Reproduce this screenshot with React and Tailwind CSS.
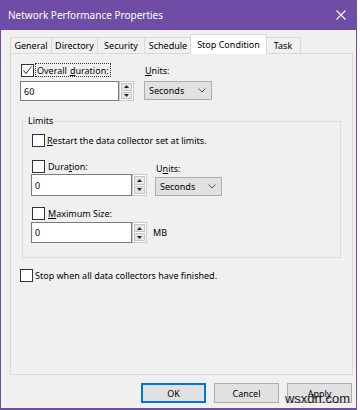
import React from "react";

const font = { fontFamily: '"Noto Sans", "Liberation Sans", sans-serif' };

function Check({ checked }) {
  return (
    <div className="w-[13px] h-[13px] border border-[#333333] bg-white flex items-center justify-center shrink-0">
      {checked && (
        <svg width="11" height="11" viewBox="0 0 11 11">
          <polyline points="1.5,5.5 4,8.5 9.5,1.5" fill="none" stroke="#222" strokeWidth="1" />
        </svg>
      )}
    </div>
  );
}

function Spinner() {
  return (
    <div className="w-[15px] h-full flex flex-col gap-px bg-white border border-[#c8c8c8] p-px">
      <div className="flex-1 bg-[#e6e6e6] border border-[#c4c4c4] flex items-center justify-center">
        <svg width="5" height="3" viewBox="0 0 5 3"><polygon points="0,3 5,3 2.5,0" fill="#222" /></svg>
      </div>
      <div className="flex-1 bg-[#e6e6e6] border border-[#c4c4c4] flex items-center justify-center">
        <svg width="5" height="3" viewBox="0 0 5 3"><polygon points="0,0 5,0 2.5,3" fill="#222" /></svg>
      </div>
    </div>
  );
}

function NumBox({ value, w, h }) {
  return (
    <div className="flex" style={{ height: h }}>
      <div className="border border-[#7a7a7a] bg-white flex items-center pl-[3px] text-black" style={{ width: w }}>
        {value}
      </div>
      <Spinner />
    </div>
  );
}

function Select({ w }) {
  return (
    <div
      className="h-[19px] bg-[#e1e1e1] border border-[#adadad] flex items-center justify-between pl-[4px] pr-[5px] text-black"
      style={{ width: w }}
    >
      <span>Seconds</span>
      <svg width="8" height="5" viewBox="0 0 8 5">
        <polyline points="0.5,0.5 4,4 7.5,0.5" fill="none" stroke="#555" strokeWidth="1" />
      </svg>
    </div>
  );
}

function Btn({ children, primary }) {
  return (
    <div
      className={
        "w-[65px] h-[20px] flex items-center justify-center bg-[#e1e1e1] text-black " +
        (primary ? "border-2 border-[#0078d7]" : "border border-[#adadad]")
      }
    >
      {children}
    </div>
  );
}

export default function App() {
  const tabs = [
    ["General", 42],
    ["Directory", 47],
    ["Security", 48],
    ["Schedule", 48],
  ];
  return (
    <div className="w-[360px] h-[410px] bg-white text-[9px] leading-none text-black" style={font}>
      <div className="relative w-[357px] h-[410px] flex flex-col bg-[#f0f0f0] border-x border-b-2 border-[#6f4ca6]">
        <div className="h-[30px] -mx-px bg-[#6f4ca6] flex items-center justify-between pl-[8px] pr-[11px] text-white text-[10px]">
          <span>Network Performance Properties</span>
          <svg width="10" height="10" viewBox="0 0 10 10">
            <line x1="0.5" y1="0.5" x2="9.5" y2="9.5" stroke="#fff" strokeWidth="1.1" />
            <line x1="9.5" y1="0.5" x2="0.5" y2="9.5" stroke="#fff" strokeWidth="1.1" />
          </svg>
        </div>

        <div className="pl-[9px] mt-[3px] flex items-end h-[20px]">
          {tabs.map(([t, w]) => (
            <div
              key={t}
              className="h-[16px] border border-b-0 border-[#d9d9d9] -mr-px bg-[#f0f0f0] flex items-center justify-center"
              style={{ width: w }}
            >
              {t}
            </div>
          ))}
          <div className="relative z-10 h-[20px] w-[77px] -mx-[1px] -mb-px border border-b-0 border-[#d9d9d9] bg-white flex items-center justify-center">
            Stop Condition
          </div>
          <div className="h-[16px] w-[35px] border border-b-0 border-l-0 border-[#d9d9d9] bg-[#f0f0f0] flex items-center justify-center">
            Task
          </div>
        </div>

        <div className="ml-[9px] w-[343px] h-[322px] border border-[#d9d9d9] bg-[#f0f0f0] pl-[10px] pt-[9px]">
          <div className="flex">
            <div className="w-[123px] flex flex-col">
              <div className="h-[14px] flex items-center">
                <Check checked />
                <span className="ml-px px-px h-[14px] flex items-center border border-dotted border-[#333]">
                  Overall <span className="ml-[3px] underline underline-offset-1">d</span>uration:
                </span>
              </div>
              <div className="mt-[4px] -ml-px">
                <NumBox value="60" w={99} h={20} />
              </div>
            </div>
            <div className="flex flex-col">
              <div className="h-[14px] flex items-center pl-px">
                <span className="underline underline-offset-1">U</span>nits:
              </div>
              <div className="mt-[4px]">
                <Select w={68} />
              </div>
            </div>
          </div>

          <div className="relative ml-px mt-[20px] w-[319px] h-[137px] border border-[#dcdcdc] pl-[9px] pt-[12px]">
            <span className="absolute left-[4px] -top-[6px] px-px bg-[#f0f0f0]">Limits</span>
            <div className="flex items-center h-[13px]">
              <Check />
              <span className="ml-[2px]">
                <span className="underline underline-offset-1">R</span>estart the data collector set at limits.
              </span>
            </div>
            <div className="flex mt-[13px]">
              <div className="w-[123px] flex flex-col">
                <div className="h-[13px] flex items-center">
                  <Check />
                  <span className="ml-[3px]">
                    Dura<span className="underline underline-offset-1">t</span>ion:
                  </span>
                </div>
                <div className="mt-px -ml-px">
                  <NumBox value="0" w={101} h={22} />
                </div>
              </div>
              <div className="flex flex-col">
                <div className="h-[13px] flex items-end pl-px">
                  U<span className="underline underline-offset-1">n</span>its:
                </div>
                <div className="mt-[4px]">
                  <Select w={67} />
                </div>
              </div>
            </div>
            <div className="flex items-center h-[13px] mt-[11px]">
              <Check />
              <span className="ml-[3px]">
                <span className="underline underline-offset-1">M</span>aximum Size:
              </span>
            </div>
            <div className="mt-[2px] -ml-px flex items-center">
              <NumBox value="0" w={101} h={21} />
              <span className="ml-[6px]">MB</span>
            </div>
          </div>

          <div className="flex items-center h-[13px] mt-[11px] -ml-px">
            <Check />
            <span className="ml-[2px]">Stop when all data collectors have finished.</span>
          </div>
        </div>

        <div className="flex justify-end gap-[8px] pr-[4px] mt-[8px]">
          <Btn primary>OK</Btn>
          <Btn>Cancel</Btn>
          <Btn>Apply</Btn>
        </div>

        <span className="absolute right-[6px] bottom-[3px] text-[13px] text-[#1a1a1a]" style={{ fontFamily: '"Liberation Sans", sans-serif' }}>
          wsxdn.com
        </span>
      </div>
    </div>
  );
}
